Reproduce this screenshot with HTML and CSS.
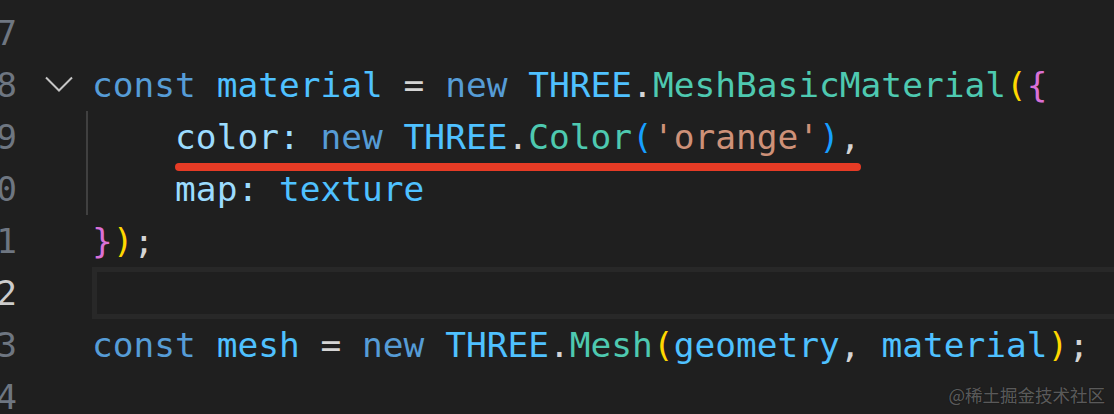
FILE: index.html
```html
<!DOCTYPE html>
<html lang="en">
<head>
<meta charset="utf-8">
<title>Editor</title>
<link rel="stylesheet" href="styles.css">
</head>
<body>
<div class="editor">
  <div class="gutter">
    <div class="ln">7</div>
    <div class="ln">8</div>
    <div class="ln">9</div>
    <div class="ln">10</div>
    <div class="ln">11</div>
    <div class="ln active">12</div>
    <div class="ln">13</div>
    <div class="ln">14</div>
  </div>
  <div class="folds">
    <div class="fold"></div>
    <div class="fold"><svg class="chev" width="28" height="16" viewBox="0 0 28 16"><polyline points="1,1.5 14,14.5 27,1.5" fill="none" stroke="#c5c5c5" stroke-width="2"/></svg></div>
    <div class="fold"></div>
    <div class="fold"></div>
    <div class="fold"></div>
    <div class="fold"></div>
    <div class="fold"></div>
    <div class="fold"></div>
  </div>
  <div class="code">
    <div class="line"></div>
    <div class="line"><span class="kw">const</span> <span class="cv">material</span> <span class="op">=</span> <span class="kw">new</span> <span class="cv">THREE</span><span class="op">.</span><span class="cls">MeshBasicMaterial</span><span class="b1">(</span><span class="b2">{</span></div>
    <div class="indent">
      <div class="line">    <span class="mark"><span class="prop">color:</span> <span class="kw">new</span> <span class="cv">THREE</span><span class="op">.</span><span class="cls">Color</span><span class="b3">(</span><span class="str">'orange'</span><span class="b3">)</span><span class="op">,</span></span></div>
      <div class="line">    <span class="prop">map:</span> <span class="cv">texture</span></div>
    </div>
    <div class="line"><span class="b2">}</span><span class="b1">)</span><span class="op">;</span></div>
    <div class="line current"></div>
    <div class="line"><span class="kw">const</span> <span class="cv">mesh</span> <span class="op">=</span> <span class="kw">new</span> <span class="cv">THREE</span><span class="op">.</span><span class="cls">Mesh</span><span class="b1">(</span><span class="cv">geometry</span><span class="op">,</span> <span class="cv">material</span><span class="b1">)</span><span class="op">;</span></div>
    <div class="line"></div>
  </div>
</div>
<div class="watermark">@稀土掘金技术社区</div>
</body>
</html>
```
FILE: styles.css
```css
html, body {
  margin: 0;
  padding: 0;
  background: #1f1f1f;
  width: 1114px;
  height: 414px;
  overflow: hidden;
}

.editor {
  display: flex;
  padding-top: 7px;
  font-family: "DejaVu Sans Mono", "Liberation Mono", monospace;
  font-size: 34.5px;
  line-height: 52px;
  color: #d4d4d4;
}

.gutter {
  width: 60px;
  margin-left: -43px;
  flex: none;
  text-align: right;
  color: #6e7681;
}

.ln {
  height: 52px;
}

.ln.active {
  color: #cccccc;
}

.folds {
  width: 75px;
  flex: none;
}

.fold {
  height: 52px;
  display: flex;
  align-items: center;
  padding-left: 28px;
}

.chev {
  display: block;
  margin-top: -3px;
}

.code {
  flex: 1;
  min-width: 0;
}

.line {
  height: 52px;
  white-space: pre;
  box-sizing: border-box;
}

.indent {
  margin-left: -6px;
  border-left: 2px solid #404040;
  padding-left: 4px;
}

.line.current {
  border: 5px solid #282828;
  border-right: none;
}

.kw { color: #569cd6; }
.cv { color: #4fc1ff; }
.op { color: #d4d4d4; }
.cls { color: #4ec9b0; }
.prop { color: #9cdcfe; }
.str { color: #ce9178; }
.b1 { color: #ffd700; }
.b2 { color: #da70d6; }
.b3 { color: #179fff; }

.mark {
  position: relative;
}

.mark::after {
  content: "";
  position: absolute;
  left: 0;
  right: 0;
  top: calc(100% + 6px);
  height: 8px;
  border-radius: 4px;
  background: #e63b25;
}

.watermark {
  position: absolute;
  right: 9px;
  bottom: 7px;
  font-family: "Noto Sans CJK SC", sans-serif;
  font-size: 17.5px;
  line-height: 24px;
  color: rgba(255, 255, 255, 0.32);
  text-shadow: 0 0 1px rgba(0, 0, 0, 0.6);
}
```
